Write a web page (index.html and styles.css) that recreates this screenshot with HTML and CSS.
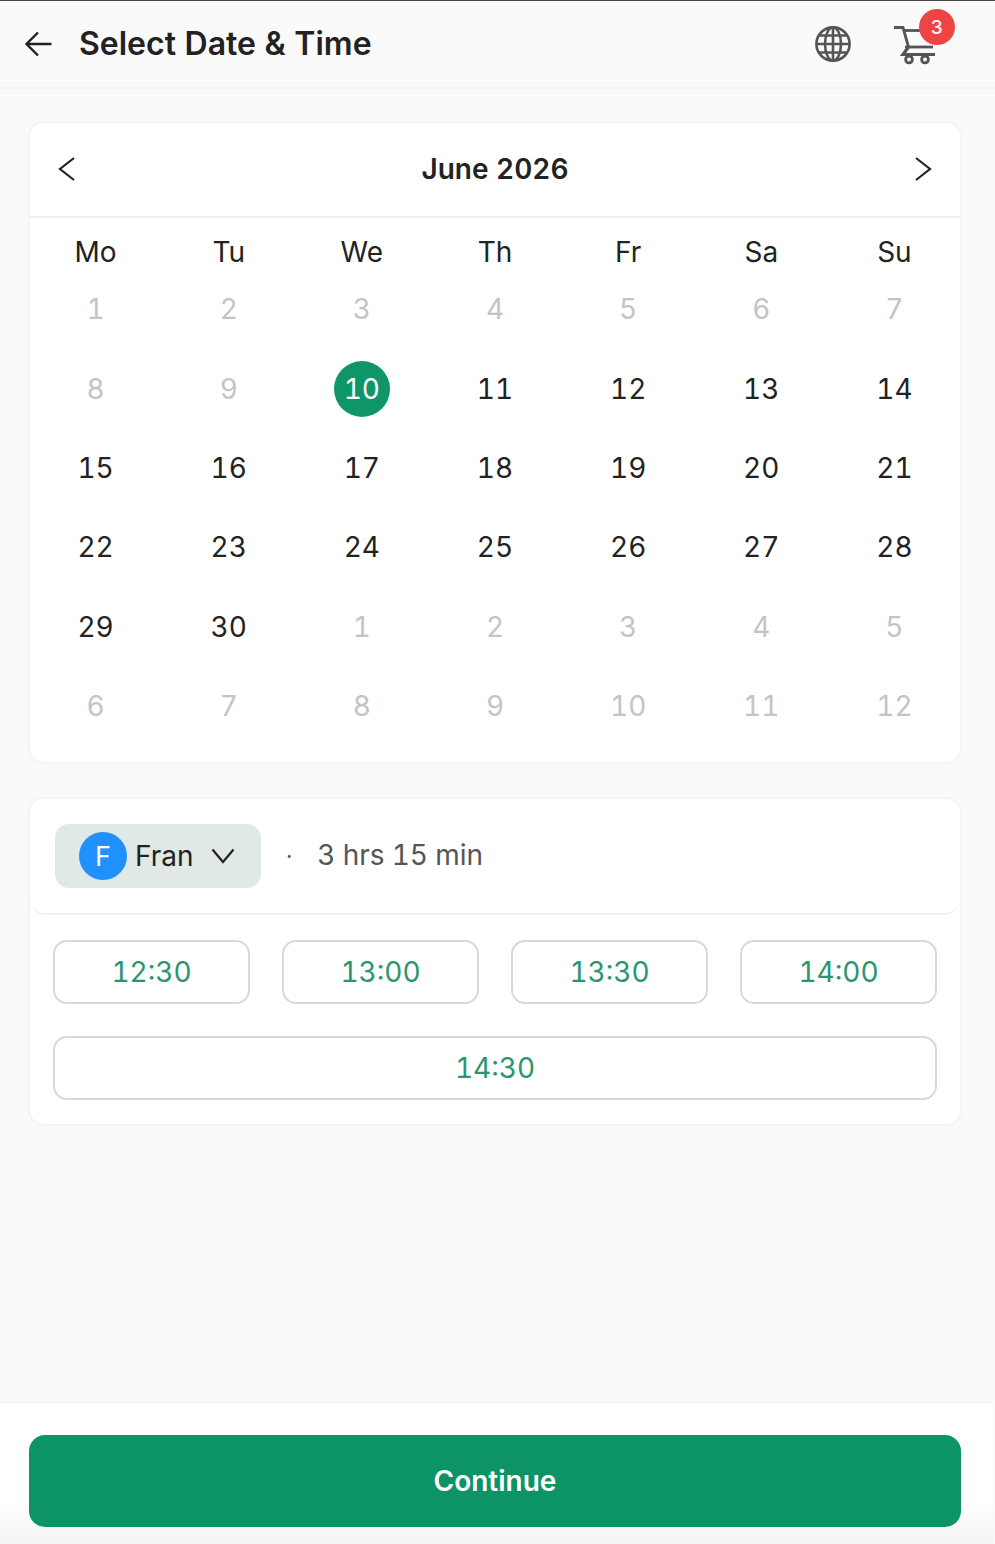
FILE: index.html
```html
<!DOCTYPE html>
<html lang="en">
<head>
  <meta charset="UTF-8" />
  <meta name="viewport" content="width=device-width, initial-scale=1.0"/>
  <title>Select Date &amp; Time</title>
  <link rel="stylesheet" href="styles.css">
</head>
<body>
  <div class="page">
    <header class="topbar">
      <svg class="back-icon" width="30" height="30" viewBox="0 0 30 30" fill="none" stroke="#222" stroke-width="2.4">
        <path d="M27.5 15H2.5M14 3.5L2.5 15L14 26.5"/>
      </svg>
      <h1 class="title">Select Date &amp; Time</h1>
      <svg class="globe-icon" width="38" height="38" viewBox="0 0 38 38" fill="none" stroke="#555" stroke-width="2.6">
        <circle cx="19" cy="19" r="16.6"/>
        <ellipse cx="19" cy="19" rx="8" ry="16.6"/>
        <path d="M19 2.4V35.6M2.4 19H35.6M5 10.5H33M5 27.5H33"/>
      </svg>
      <div class="cart">
        <svg width="42" height="40" viewBox="0 0 42 40" fill="none" stroke="#555" stroke-width="2.8">
          <path d="M0 2.5H9L14.5 22"/>
          <path d="M9.5 5.5H26"/>
          <path d="M11 22H39"/>
          <path d="M14.5 22L9 29.5H41" stroke-width="3.2"/>
          <circle cx="15" cy="34.5" r="3.4"/>
          <circle cx="31" cy="34.5" r="3.4"/>
        </svg>
        <span class="badge">3</span>
      </div>
    </header>

    <main class="content">
      <section class="card calendar">
        <div class="cal-head">
          <svg width="18" height="26" viewBox="0 0 18 26" fill="none" stroke="#222" stroke-width="2.2"><path d="M16 2L2 13L16 24"/></svg>
          <h2 class="month">June 2026</h2>
          <svg width="18" height="26" viewBox="0 0 18 26" fill="none" stroke="#222" stroke-width="2.2"><path d="M2 2L16 13L2 24"/></svg>
        </div>
        <div class="cal-week">
          <div class="wd">Mo</div><div class="wd">Tu</div><div class="wd">We</div><div class="wd">Th</div><div class="wd">Fr</div><div class="wd">Sa</div><div class="wd">Su</div>
        </div>
        <div class="cal-days">
          <div class="day off">1</div><div class="day off">2</div><div class="day off">3</div><div class="day off">4</div><div class="day off">5</div><div class="day off">6</div><div class="day off">7</div>
          <div class="day off">8</div><div class="day off">9</div><div class="day"><span class="selected">10</span></div><div class="day">11</div><div class="day">12</div><div class="day">13</div><div class="day">14</div>
          <div class="day">15</div><div class="day">16</div><div class="day">17</div><div class="day">18</div><div class="day">19</div><div class="day">20</div><div class="day">21</div>
          <div class="day">22</div><div class="day">23</div><div class="day">24</div><div class="day">25</div><div class="day">26</div><div class="day">27</div><div class="day">28</div>
          <div class="day">29</div><div class="day">30</div><div class="day off">1</div><div class="day off">2</div><div class="day off">3</div><div class="day off">4</div><div class="day off">5</div>
          <div class="day off">6</div><div class="day off">7</div><div class="day off">8</div><div class="day off">9</div><div class="day off">10</div><div class="day off">11</div><div class="day off">12</div>
        </div>
      </section>

      <section class="card slots">
        <div class="staff-row">
          <div class="staff">
            <span class="avatar">F</span>
            <span class="staff-name">Fran</span>
            <svg width="24" height="16" viewBox="0 0 24 16" fill="none" stroke="#222" stroke-width="2.2"><path d="M1.5 1.5L12 14L22.5 1.5"/></svg>
          </div>
          <span class="dot">·</span>
          <span class="duration">3 hrs 15 min</span>
        </div>
        <div class="times">
          <button class="time">12:30</button>
          <button class="time">13:00</button>
          <button class="time">13:30</button>
          <button class="time">14:00</button>
          <button class="time wide">14:30</button>
        </div>
      </section>
    </main>

    <footer class="footer">
      <button class="continue">Continue</button>
    </footer>
  </div>
</body>
</html>
```

FILE: styles.css
```css
* {
  box-sizing: border-box;
}
html, body {
  margin: 0;
  height: 100%;
}
body {
  font-family: Inter, "Liberation Sans", sans-serif;
  font-variant-numeric: tabular-nums;
  background: #fafafa;
  color: #222;
}
.page {
  height: 1544px;
  display: flex;
  flex-direction: column;
  overflow: hidden;
}
.topbar {
  height: 89px;
  flex: none;
  display: flex;
  align-items: center;
  padding: 0 59px 0 24px;
  border-top: 1px solid #444;
  border-bottom: 2px solid #f3f3f3;
}
.back-icon {
  flex: none;
}
.title {
  flex: 1;
  margin: 0 0 2px 25px;
  font-size: 32px;
  font-weight: 600;
  color: #222;
}
.globe-icon {
  flex: none;
  margin-right: 42px;
}
.cart {
  position: relative;
  width: 42px;
  height: 40px;
  margin-top: 1px;
  flex: none;
}
.badge {
  position: absolute;
  top: -15.5px;
  left: 25px;
  width: 36px;
  height: 36px;
  border-radius: 50%;
  background: #ef4444;
  color: #fff;
  font-size: 19px;
  font-weight: 500;
  display: flex;
  align-items: center;
  justify-content: center;
}
.content {
  flex: 1;
  padding: 32px 33px 0 28px;
}
.card {
  background: #fff;
  border: 2px solid #f4f4f4;
  border-radius: 16px;
}
.calendar {
  height: 643px;
}
.cal-head {
  height: 95px;
  display: flex;
  align-items: center;
  justify-content: space-between;
  padding: 0 28px 2px;
  border-bottom: 2px solid #f1f1f1;
}
.month {
  margin: 0;
  font-size: 28px;
  font-weight: 600;
  color: #222;
}
.cal-week, .cal-days {
  display: grid;
  grid-template-columns: repeat(7, 1fr);
  margin: 0 -1px;
}
.cal-week {
  height: 34px;
  margin-top: 17px;
}
.cal-days {
  grid-auto-rows: 56px;
  row-gap: 23.4px;
  margin-top: 12.2px;
}
.wd, .day {
  display: flex;
  align-items: center;
  justify-content: center;
  font-size: 28px;
  color: #222;
}
.day.off {
  color: #c4c4c4;
}
.selected {
  width: 56px;
  height: 56px;
  border-radius: 50%;
  background: #0f9668;
  color: #fff;
  display: flex;
  align-items: center;
  justify-content: center;
}
.slots {
  margin-top: 33px;
  height: 329px;
}
.staff-row {
  height: 116px;
  display: flex;
  align-items: center;
  padding: 0 25px;
  background: #fff;
  border-bottom: 2px solid #f1f1f1;
  border-radius: 16px;
}
.staff {
  width: 206px;
  height: 64px;
  display: flex;
  align-items: center;
  padding-left: 24px;
  background: #e0e9e5;
  border-radius: 14px;
}
.avatar {
  width: 48px;
  height: 48px;
  border-radius: 50%;
  background: #2190ff;
  color: #fff;
  font-size: 27px;
  display: flex;
  align-items: center;
  justify-content: center;
  flex: none;
}
.staff-name {
  margin-left: 8px;
  margin-right: 17px;
  font-size: 28px;
  color: #222;
}
.dot {
  margin-left: 25px;
  font-size: 22px;
  color: #555;
}
.duration {
  margin: 0 0 2px 25px;
  font-size: 28px;
  letter-spacing: -0.1px;
  color: #555;
}
.times {
  display: grid;
  grid-template-columns: repeat(4, 197px);
  grid-auto-rows: 64px;
  gap: 32px;
  padding: 25px 0 0 23px;
}
.time {
  background: #fff;
  border: 2px solid #d9d9d9;
  border-radius: 14px;
  font-family: inherit;
  font-variant-numeric: inherit;
  font-size: 28px;
  color: #2a9670;
  padding: 0;
}
.time.wide {
  grid-column: 1 / -1;
}
.footer {
  height: 143px;
  flex: none;
  margin-right: 2px;
  padding: 32px 0 0 29px;
  background: linear-gradient(#fff 100px, #f3f3f3);
  border-top: 2px solid #f3f3f3;
}
.continue {
  width: 932px;
  height: 92px;
  border: none;
  border-radius: 16px;
  background: #0d9466;
  color: #fff;
  font-family: inherit;
  font-size: 28px;
  font-weight: 600;
}
```
